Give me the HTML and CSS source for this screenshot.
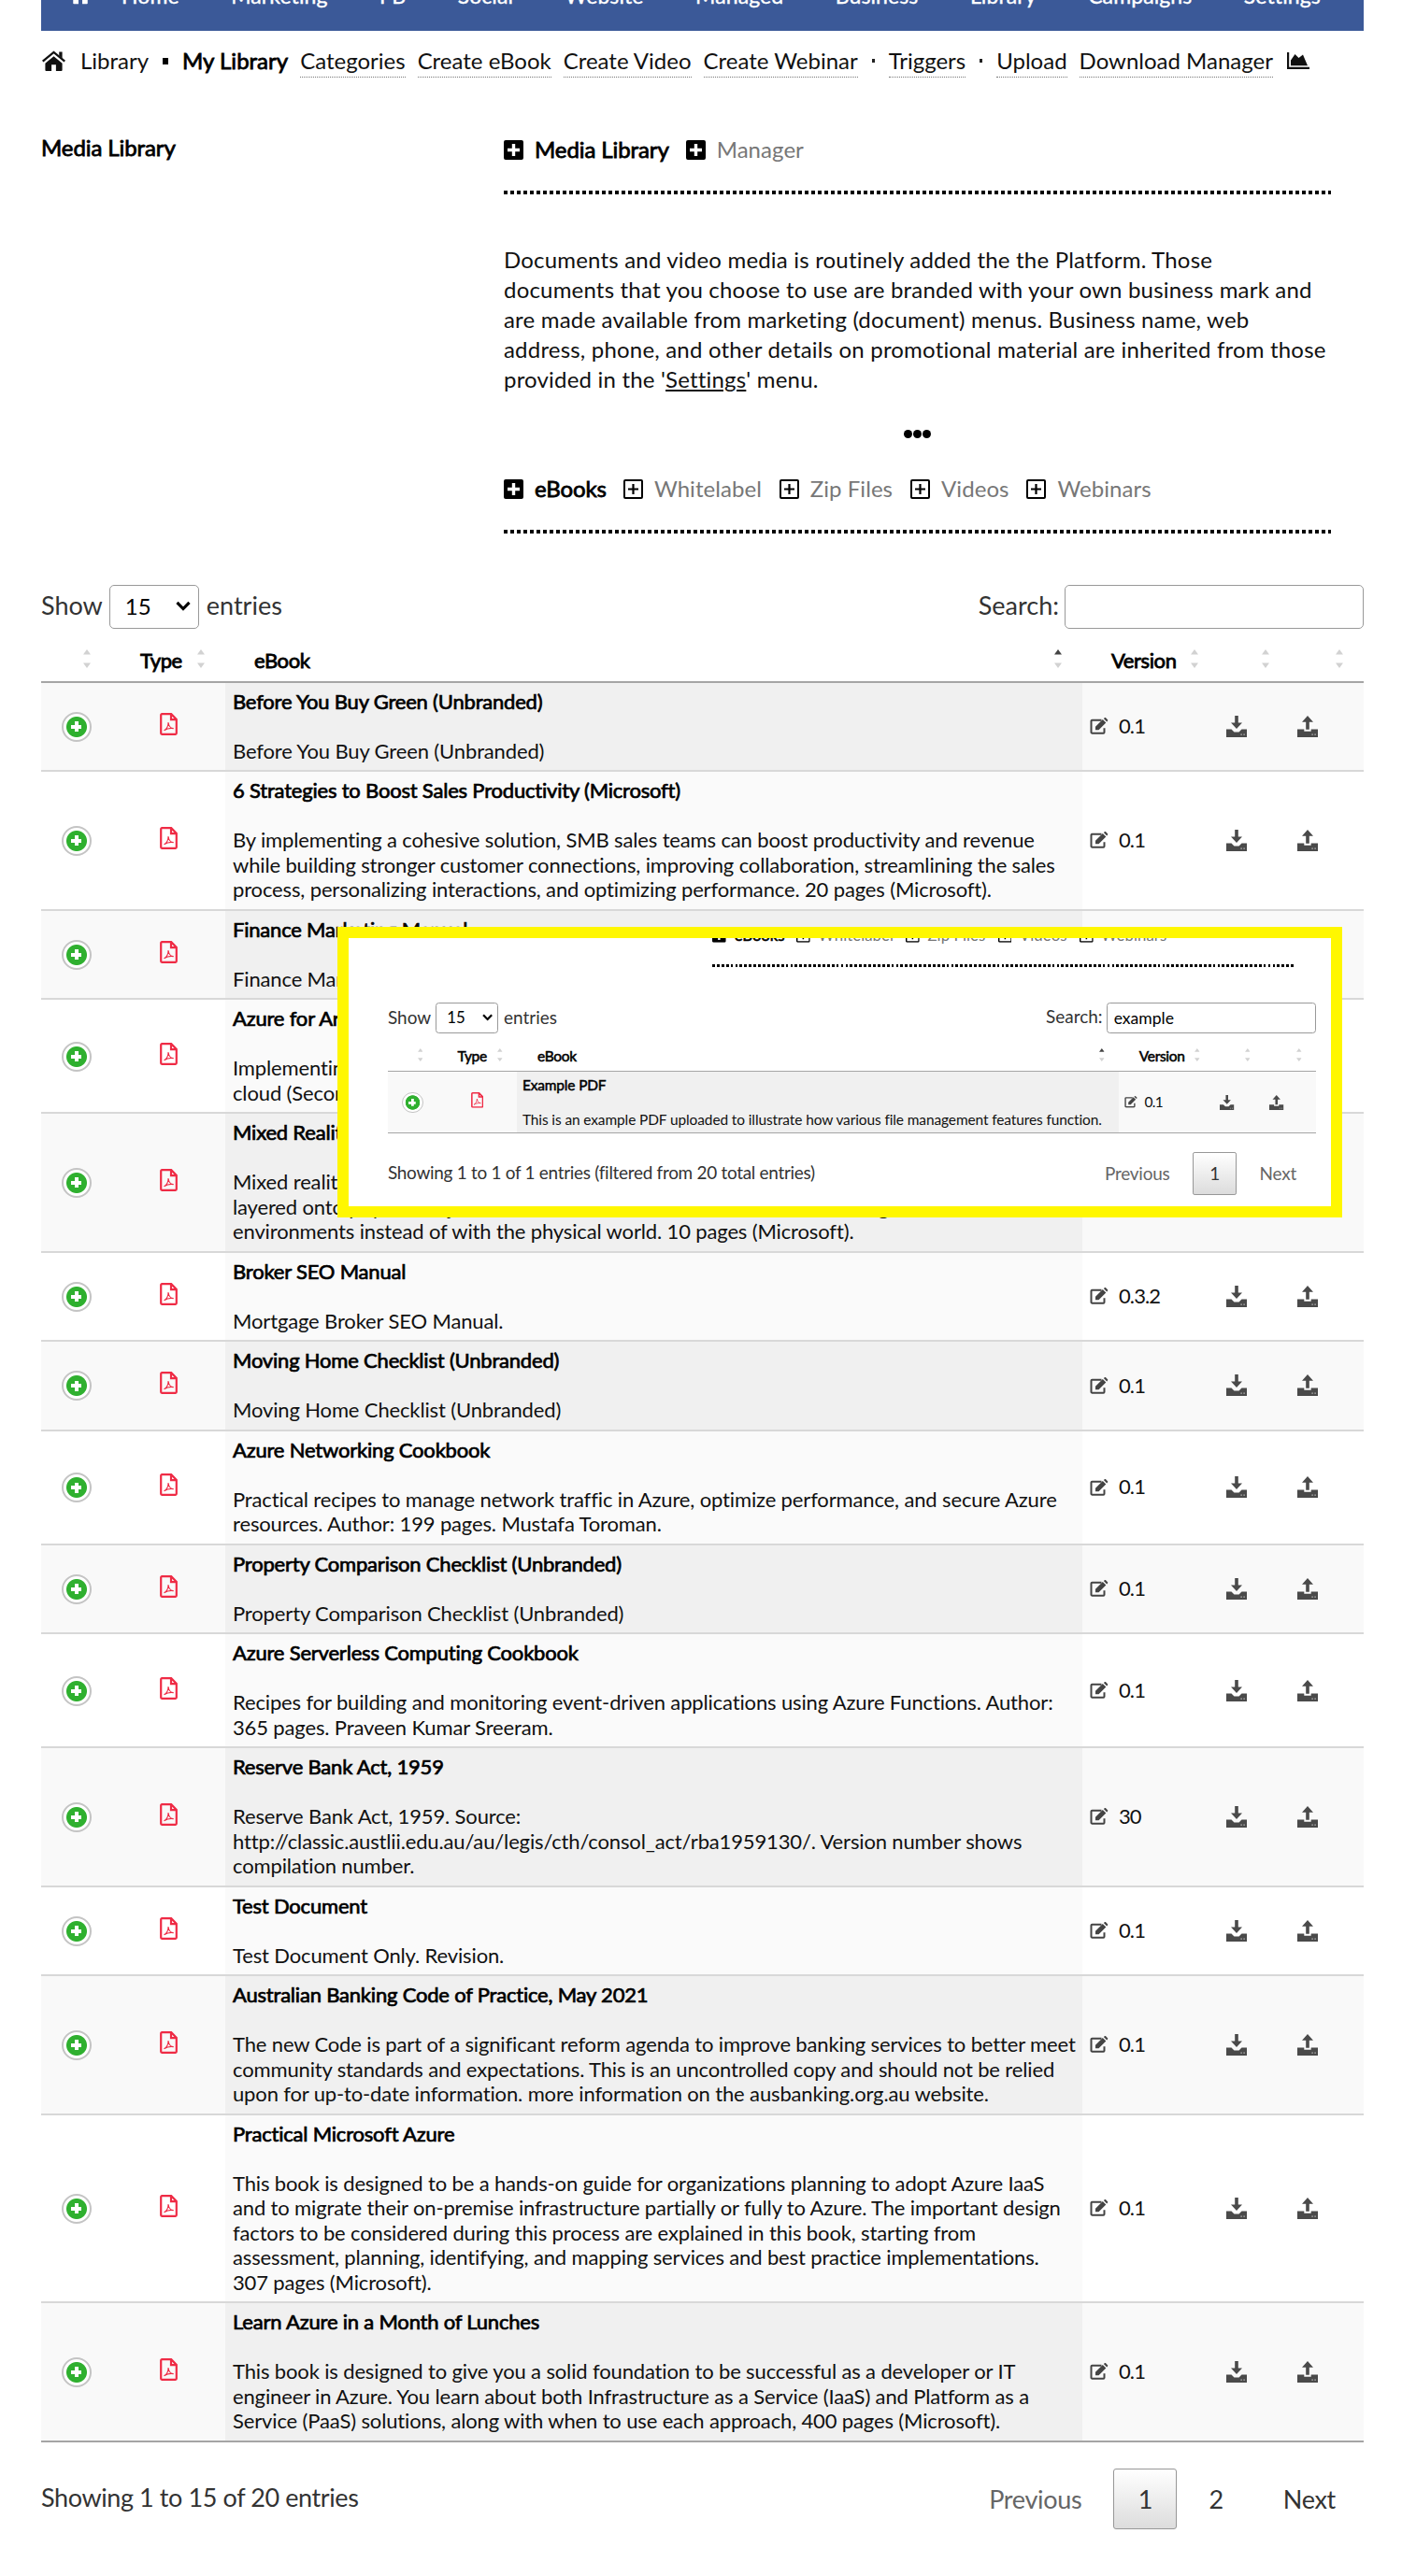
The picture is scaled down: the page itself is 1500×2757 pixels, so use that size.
FILE: index.html
```html
<!DOCTYPE html>
<html lang="en">
<head>
  <meta charset="UTF-8">
  <meta name="viewport" content="width=device-width, initial-scale=1.0">
  <title>My Library - Media Library</title>
  <link rel="stylesheet" href="styles.css">
</head>
<body>
  <!-- Icon sprite -->
  <svg class="sprite" width="0" height="0">
    <symbol id="i-home" viewBox="0 0 27 23">
      <path d="M13.5 6.5 4 14.3V22a1 1 0 0 0 1 1h6v-7h5v7h6a1 1 0 0 0 1-1v-7.7z"/>
      <path d="M1.2 12.2 13.5 2l12.3 10.2" fill="none" stroke="currentColor" stroke-width="2.4"/>
      <path d="M19.5 1.5H23V9l-3.5-3z"/>
    </symbol>
    <symbol id="i-chart" viewBox="0 0 24 20">
      <path d="M0 1h2.2v15.8H24V19H0z"/>
      <path d="M4 15.3V9.5L8.5 3l4 4L17 3.5l5 11.8z"/>
    </symbol>
    <symbol id="i-plus" viewBox="0 0 21 21">
      <path fill-rule="evenodd" d="M2 0h17a2 2 0 0 1 2 2v17a2 2 0 0 1-2 2H2a2 2 0 0 1-2-2V2a2 2 0 0 1 2-2zm6.8 4v4.8H4v3.4h4.8V17h3.4v-4.8H17V8.8h-4.8V4z"/>
    </symbol>
    <symbol id="i-plus-o" viewBox="0 0 21 21">
      <rect x="1" y="1" width="19" height="19" rx="1" fill="none" stroke="currentColor" stroke-width="2"/>
      <path d="M9.4 5h2.2v4.4H16v2.2h-4.400V16H9.400v-4.400H5V9.400h4.400z"/>
    </symbol>
    <symbol id="i-pdf" viewBox="0 0 19 24">
      <path d="M1.2 2.2a1 1 0 0 1 1-1h10L17.8 7v14.800a1 1 0 0 1-1 1H2.200a1 1 0 0 1-1-1zM12 1.200V7.200h5.800" fill="none" stroke="currentColor" stroke-width="2.200"/>
      <path d="M4.500 18.800c2.500-1.200 4.500-5 4.600-8.800.4 4 2.500 6.500 5.600 6.600-3.200-.6-7 .2-10.200 2.200z" fill="none" stroke="currentColor" stroke-width="1.100"/>
    </symbol>
    <symbol id="i-edit" viewBox="0 0 20 18">
      <path d="M12.500 2.700H2.500a1 1 0 0 0-1 1v12a1 1 0 0 0 1 1h12a1 1 0 0 0 1-1v-4.500" fill="none" stroke="currentColor" stroke-width="2"/>
      <path d="m6 9.800 7.800-7.900 3.500 3.500L9.500 13.300H6zM14.800 1l1-.8a1 1 0 0 1 1.300 0L19 2.200a1 1 0 0 1 0 1.300l-.8.900z"/>
    </symbol>
    <symbol id="i-download" viewBox="0 0 22 23">
      <path d="M9.200 0h3.600v7.500H17l-6 6.500-6-6.500h4.200z"/>
      <path d="M0 14.500h5.500l3 3h5l3-3H22V23H0z"/>
      <path d="M15.500 19.500h1.200v1.200h-1.200zM18.500 19.500h1.200v1.200h-1.200z" fill="#ccc"/>
    </symbol>
    <symbol id="i-upload" viewBox="0 0 22 23">
      <path d="m11 0 6 6.700h-4.200v8H9.200v-8H5z"/>
      <path d="M0 14.500h7.300v2.200h7.400v-2.200H22V23H0z"/>
      <path d="M15.500 19.500h1.200v1.200h-1.200zM18.500 19.500h1.200v1.200h-1.200z" fill="#ccc"/>
    </symbol>
    <symbol id="i-chevron" viewBox="0 0 16 11">
      <path d="m1.500 1.800 6.500 6.700 6.500-6.700" fill="none" stroke="currentColor" stroke-width="3.200"/>
    </symbol>
    <symbol id="i-sort" viewBox="0 0 8 20">
      <path d="m4 0 4 5.500H0z"/>
      <path d="m4 20 4-5.500H0z"/>
    </symbol>
    <symbol id="i-sort-asc" viewBox="0 0 8 20">
      <path d="m4 0 4 5.500H0z" fill="#444"/>
      <path d="m4 20 4-5.500H0z"/>
    </symbol>
  </svg>

  <div class="page">
    <nav class="navbar">
      <svg class="nav-home"><use href="#i-home"/></svg>
      <div class="nav-links">
        <a>Home</a><a>Marketing</a><a>FB</a><a>Social</a><a>Website</a><a>Managed</a><a>Business</a><a>Library</a><a>Campaigns</a><a>Settings</a>
      </div>
    </nav>

    <div class="breadcrumb">
      <svg class="bc-home"><use href="#i-home"/></svg>
      <span>Library</span>
      <i class="square"></i>
      <b>My Library</b>
      <a>Categories</a>
      <a>Create eBook</a>
      <a>Create Video</a>
      <a>Create Webinar</a>
      <i class="dot"></i>
      <a>Triggers</a>
      <i class="dot"></i>
      <a>Upload</a>
      <a>Download Manager</a>
      <svg class="bc-chart"><use href="#i-chart"/></svg>
    </div>

    <section class="intro">
      <b class="intro-title">Media Library</b>
      <div class="intro-body">
        <div class="tabs">
          <svg><use href="#i-plus"/></svg><b>Media Library</b>
          <svg><use href="#i-plus"/></svg><span>Manager</span>
        </div>
        <div class="rule"></div>
        <p>Documents and video media is routinely added the the Platform. Those<br>documents that you choose to use are branded with your own business mark and<br>are made available from marketing (document) menus. Business name, web<br>address, phone, and other details on promotional material are inherited from those<br>provided in the '<u>Settings</u>' menu.</p>
        <div class="ellipsis"><i></i><i></i><i></i></div>
        <div class="tabs">
          <svg><use href="#i-plus"/></svg><b>eBooks</b>
          <svg><use href="#i-plus-o"/></svg><span>Whitelabel</span>
          <svg><use href="#i-plus-o"/></svg><span>Zip Files</span>
          <svg><use href="#i-plus-o"/></svg><span>Videos</span>
          <svg><use href="#i-plus-o"/></svg><span>Webinars</span>
        </div>
        <div class="rule"></div>
      </div>
    </section>

    <div class="controls">
      <span>Show</span>
      <span class="select">15<svg><use href="#i-chevron"/></svg></span>
      <span>entries</span>
      <label class="search">Search:<input type="text"></label>
    </div>

    <table class="data">
      <colgroup><col class="c1"><col class="c2"><col class="c3"><col class="c4"><col class="c5"><col class="c6"></colgroup>
      <thead>
        <tr>
          <th><div><svg><use href="#i-sort"/></svg></div></th>
          <th><div><b>Type</b><svg><use href="#i-sort"/></svg></div></th>
          <th><div><b>eBook</b><svg><use href="#i-sort-asc"/></svg></div></th>
          <th><div><b>Version</b><svg><use href="#i-sort"/></svg></div></th>
          <th><div><svg><use href="#i-sort"/></svg></div></th>
          <th><div><svg><use href="#i-sort"/></svg></div></th>
        </tr>
      </thead>
      <tbody>
        <tr>
          <td><i class="expand"></i></td>
          <td><svg class="pdf"><use href="#i-pdf"/></svg></td>
          <td><b>Before You Buy Green (Unbranded)</b><p>Before You Buy Green (Unbranded)</p></td>
          <td><div class="version"><svg><use href="#i-edit"/></svg>0.1</div></td>
          <td><svg class="act"><use href="#i-download"/></svg></td>
          <td><svg class="act"><use href="#i-upload"/></svg></td>
        </tr>
        <tr>
          <td><i class="expand"></i></td>
          <td><svg class="pdf"><use href="#i-pdf"/></svg></td>
          <td><b>6 Strategies to Boost Sales Productivity (Microsoft)</b><p>By implementing a cohesive solution, SMB sales teams can boost productivity and revenue<br>while building stronger customer connections, improving collaboration, streamlining the sales<br>process, personalizing interactions, and optimizing performance. 20 pages (Microsoft).</p></td>
          <td><div class="version"><svg><use href="#i-edit"/></svg>0.1</div></td>
          <td><svg class="act"><use href="#i-download"/></svg></td>
          <td><svg class="act"><use href="#i-upload"/></svg></td>
        </tr>
        <tr>
          <td><i class="expand"></i></td>
          <td><svg class="pdf"><use href="#i-pdf"/></svg></td>
          <td><b>Finance Marketing Manual</b><p>Finance Marketing Manual</p></td>
          <td><div class="version"><svg><use href="#i-edit"/></svg>0.1</div></td>
          <td><svg class="act"><use href="#i-download"/></svg></td>
          <td><svg class="act"><use href="#i-upload"/></svg></td>
        </tr>
        <tr>
          <td><i class="expand"></i></td>
          <td><svg class="pdf"><use href="#i-pdf"/></svg></td>
          <td><b>Azure for Architects</b><p>Implementing cloud design, DevOps, containers and serverless solutions in the public<br>cloud (Second Edition).</p></td>
          <td><div class="version"><svg><use href="#i-edit"/></svg>0.1</div></td>
          <td><svg class="act"><use href="#i-download"/></svg></td>
          <td><svg class="act"><use href="#i-upload"/></svg></td>
        </tr>
        <tr>
          <td><i class="expand"></i></td>
          <td><svg class="pdf"><use href="#i-pdf"/></svg></td>
          <td><b>Mixed Reality</b><p>Mixed reality blends the physical and digital worlds, with virtual content<br>layered onto physical objects. Users interact with immersive virtual settings and<br>environments instead of with the physical world. 10 pages (Microsoft).</p></td>
          <td><div class="version"><svg><use href="#i-edit"/></svg>0.1</div></td>
          <td><svg class="act"><use href="#i-download"/></svg></td>
          <td><svg class="act"><use href="#i-upload"/></svg></td>
        </tr>
        <tr>
          <td><i class="expand"></i></td>
          <td><svg class="pdf"><use href="#i-pdf"/></svg></td>
          <td><b>Broker SEO Manual</b><p>Mortgage Broker SEO Manual.</p></td>
          <td><div class="version"><svg><use href="#i-edit"/></svg>0.3.2</div></td>
          <td><svg class="act"><use href="#i-download"/></svg></td>
          <td><svg class="act"><use href="#i-upload"/></svg></td>
        </tr>
        <tr>
          <td><i class="expand"></i></td>
          <td><svg class="pdf"><use href="#i-pdf"/></svg></td>
          <td><b>Moving Home Checklist (Unbranded)</b><p>Moving Home Checklist (Unbranded)</p></td>
          <td><div class="version"><svg><use href="#i-edit"/></svg>0.1</div></td>
          <td><svg class="act"><use href="#i-download"/></svg></td>
          <td><svg class="act"><use href="#i-upload"/></svg></td>
        </tr>
        <tr>
          <td><i class="expand"></i></td>
          <td><svg class="pdf"><use href="#i-pdf"/></svg></td>
          <td><b>Azure Networking Cookbook</b><p>Practical recipes to manage network traffic in Azure, optimize performance, and secure Azure<br>resources. Author: 199 pages. Mustafa Toroman.</p></td>
          <td><div class="version"><svg><use href="#i-edit"/></svg>0.1</div></td>
          <td><svg class="act"><use href="#i-download"/></svg></td>
          <td><svg class="act"><use href="#i-upload"/></svg></td>
        </tr>
        <tr>
          <td><i class="expand"></i></td>
          <td><svg class="pdf"><use href="#i-pdf"/></svg></td>
          <td><b>Property Comparison Checklist (Unbranded)</b><p>Property Comparison Checklist (Unbranded)</p></td>
          <td><div class="version"><svg><use href="#i-edit"/></svg>0.1</div></td>
          <td><svg class="act"><use href="#i-download"/></svg></td>
          <td><svg class="act"><use href="#i-upload"/></svg></td>
        </tr>
        <tr>
          <td><i class="expand"></i></td>
          <td><svg class="pdf"><use href="#i-pdf"/></svg></td>
          <td><b>Azure Serverless Computing Cookbook</b><p>Recipes for building and monitoring event-driven applications using Azure Functions. Author:<br>365 pages. Praveen Kumar Sreeram.</p></td>
          <td><div class="version"><svg><use href="#i-edit"/></svg>0.1</div></td>
          <td><svg class="act"><use href="#i-download"/></svg></td>
          <td><svg class="act"><use href="#i-upload"/></svg></td>
        </tr>
        <tr>
          <td><i class="expand"></i></td>
          <td><svg class="pdf"><use href="#i-pdf"/></svg></td>
          <td><b>Reserve Bank Act, 1959</b><p>Reserve Bank Act, 1959. Source:<br>http://classic.austlii.edu.au/au/legis/cth/consol_act/rba1959130/. Version number shows<br>compilation number.</p></td>
          <td><div class="version"><svg><use href="#i-edit"/></svg>30</div></td>
          <td><svg class="act"><use href="#i-download"/></svg></td>
          <td><svg class="act"><use href="#i-upload"/></svg></td>
        </tr>
        <tr>
          <td><i class="expand"></i></td>
          <td><svg class="pdf"><use href="#i-pdf"/></svg></td>
          <td><b>Test Document</b><p>Test Document Only. Revision.</p></td>
          <td><div class="version"><svg><use href="#i-edit"/></svg>0.1</div></td>
          <td><svg class="act"><use href="#i-download"/></svg></td>
          <td><svg class="act"><use href="#i-upload"/></svg></td>
        </tr>
        <tr>
          <td><i class="expand"></i></td>
          <td><svg class="pdf"><use href="#i-pdf"/></svg></td>
          <td><b>Australian Banking Code of Practice, May 2021</b><p>The new Code is part of a significant reform agenda to improve banking services to better meet<br>community standards and expectations. This is an uncontrolled copy and should not be relied<br>upon for up-to-date information. more information on the ausbanking.org.au website.</p></td>
          <td><div class="version"><svg><use href="#i-edit"/></svg>0.1</div></td>
          <td><svg class="act"><use href="#i-download"/></svg></td>
          <td><svg class="act"><use href="#i-upload"/></svg></td>
        </tr>
        <tr>
          <td><i class="expand"></i></td>
          <td><svg class="pdf"><use href="#i-pdf"/></svg></td>
          <td><b>Practical Microsoft Azure</b><p>This book is designed to be a hands-on guide for organizations planning to adopt Azure IaaS<br>and to migrate their on-premise infrastructure partially or fully to Azure. The important design<br>factors to be considered during this process are explained in this book, starting from<br>assessment, planning, identifying, and mapping services and best practice implementations.<br>307 pages (Microsoft).</p></td>
          <td><div class="version"><svg><use href="#i-edit"/></svg>0.1</div></td>
          <td><svg class="act"><use href="#i-download"/></svg></td>
          <td><svg class="act"><use href="#i-upload"/></svg></td>
        </tr>
        <tr>
          <td><i class="expand"></i></td>
          <td><svg class="pdf"><use href="#i-pdf"/></svg></td>
          <td><b>Learn Azure in a Month of Lunches</b><p>This book is designed to give you a solid foundation to be successful as a developer or IT<br>engineer in Azure. You learn about both Infrastructure as a Service (IaaS) and Platform as a<br>Service (PaaS) solutions, along with when to use each approach, 400 pages (Microsoft).</p></td>
          <td><div class="version"><svg><use href="#i-edit"/></svg>0.1</div></td>
          <td><svg class="act"><use href="#i-download"/></svg></td>
          <td><svg class="act"><use href="#i-upload"/></svg></td>
        </tr>
      </tbody>
    </table>

    <div class="footer">
      <span class="info">Showing 1 to 15 of 20 entries</span>
      <div class="pager">
        <a class="disabled">Previous</a><a class="current">1</a><a>2</a><a>Next</a>
      </div>
    </div>
  </div>

  <!-- Search result inset -->
  <div class="inset">
    <div class="inset-body">
      <div class="tabs">
        <svg><use href="#i-plus"/></svg><b>eBooks</b>
        <svg><use href="#i-plus-o"/></svg><span>Whitelabel</span>
        <svg><use href="#i-plus-o"/></svg><span>Zip Files</span>
        <svg><use href="#i-plus-o"/></svg><span>Videos</span>
        <svg><use href="#i-plus-o"/></svg><span>Webinars</span>
      </div>
      <div class="rule"></div>
      <div class="controls">
        <span>Show</span>
        <span class="select">15<svg><use href="#i-chevron"/></svg></span>
        <span>entries</span>
        <label class="search">Search:<input type="text" value="example"></label>
      </div>
      <table class="data">
        <colgroup><col class="c1"><col class="c2"><col class="c3"><col class="c4"><col class="c5"><col class="c6"></colgroup>
        <thead>
          <tr>
            <th><div><svg><use href="#i-sort"/></svg></div></th>
            <th><div><b>Type</b><svg><use href="#i-sort"/></svg></div></th>
            <th><div><b>eBook</b><svg><use href="#i-sort-asc"/></svg></div></th>
            <th><div><b>Version</b><svg><use href="#i-sort"/></svg></div></th>
            <th><div><svg><use href="#i-sort"/></svg></div></th>
            <th><div><svg><use href="#i-sort"/></svg></div></th>
          </tr>
        </thead>
        <tbody>
          <tr>
            <td><i class="expand"></i></td>
            <td><svg class="pdf"><use href="#i-pdf"/></svg></td>
            <td><b>Example PDF</b><p>This is an example PDF uploaded to illustrate how various file management features function.</p></td>
            <td><div class="version"><svg><use href="#i-edit"/></svg>0.1</div></td>
            <td><svg class="act"><use href="#i-download"/></svg></td>
            <td><svg class="act"><use href="#i-upload"/></svg></td>
          </tr>
        </tbody>
      </table>
      <div class="footer">
        <span class="info">Showing 1 to 1 of 1 entries (filtered from 20 total entries)</span>
        <div class="pager">
          <a class="disabled">Previous</a><a class="current">1</a><a class="disabled">Next</a>
        </div>
      </div>
    </div>
  </div>
</body>
</html>
```
FILE: styles.css
```css
* {
  box-sizing: border-box;
}

body {
  margin: 0;
  position: relative;
  background: #fff;
  color: #111;
  font-family: Lato, "Liberation Sans", sans-serif;
  font-size: 24px;
  line-height: 32px;
  white-space: nowrap;
}

svg {
  display: block;
  flex: none;
  fill: currentColor;
}

.sprite {
  position: absolute;
}

/* regular weight thickened, so bold keeps the regular widths */
b {
  font-weight: 400;
  color: #000;
  -webkit-text-stroke: 0.8px #000;
}

.page {
  width: 1415px;
  height: 2757px;
  margin-left: 44px;
  overflow: hidden;
}

/* Navigation */
.navbar {
  height: 33px;
  background: #3b5998;
  color: #fff;
  display: flex;
  overflow: hidden;
}

.nav-home {
  width: 22px;
  height: 20px;
  margin: -15px 0 0 31px;
}

.nav-links {
  width: 1283px;
  margin: -19px 0 0 33px;
  display: flex;
  justify-content: space-between;
  font-size: 23px;
  line-height: 28px;
  letter-spacing: 0.1px;
  -webkit-text-stroke: 0.4px #fff;
}

.breadcrumb {
  width: 1357px;
  margin-top: 16px;
  display: flex;
  gap: 13px;
  align-items: center;
}

.breadcrumb a {
  height: 34px;
  margin-bottom: -2px;
  border-bottom: 1px dotted #777;
}

.bc-home {
  width: 27px;
  height: 22px;
  margin-right: 2px;
}

.bc-chart {
  width: 24px;
  height: 20px;
  margin-left: auto;
}

.square {
  width: 6px;
  height: 7px;
  margin: 0 2px;
  background: #000;
}

.dot {
  width: 3px;
  height: 4px;
  margin: 0 2px;
  background: #222;
}

/* Intro */
.intro {
  margin-top: 61px;
  display: flex;
}

.intro-title {
  width: 495px;
  letter-spacing: -0.1px;
}

.intro-body {
  width: 885px;
  padding-top: 2px;
}

.tabs {
  display: flex;
  align-items: center;
}

.tabs svg {
  width: 21px;
  height: 21px;
  color: #000;
}

.tabs b,
.tabs span {
  margin: 0 18px 0 12px;
}

.tabs b {
  letter-spacing: -0.1px;
}

.tabs span {
  margin-right: 19px;
  letter-spacing: 0.05px;
  color: #777;
}

.rule {
  width: 885px;
  height: 4px;
  margin-top: 28px;
  background: repeating-linear-gradient(90deg, #000 0 4px, #fff 4px 7px);
}

.intro p {
  margin: 54px 0 38px;
  letter-spacing: 0.19px;
}

.ellipsis {
  margin-bottom: 38px;
  display: flex;
  justify-content: center;
  gap: 1px;
}

.ellipsis i {
  width: 9px;
  height: 9px;
  border-radius: 50%;
  background: #000;
}

/* Table controls */
.controls {
  height: 47px;
  margin-top: 55px;
  display: flex;
  align-items: center;
  font-size: 27px;
  color: #333;
}

.controls > span:not(.select) {
  padding-bottom: 3px;
}

.select {
  width: 96px;
  height: 47px;
  margin: 0 8px 0 7px;
  padding: 0 8px 2px 16px;
  border: 1.5px solid #999;
  border-radius: 5px;
  display: flex;
  align-items: center;
  justify-content: space-between;
  font-size: 24px;
  color: #000;
}

.select svg {
  width: 16px;
  height: 11px;
}

.search {
  margin-left: auto;
  display: flex;
  line-height: 44px;
}

.search input {
  width: 320px;
  height: 47px;
  margin-left: 6px;
  padding: 0 10px;
  border: 1.5px solid #999;
  border-radius: 5px;
  font: 25px Lato, sans-serif;
}

/* Data table */
.data {
  width: 1415px;
  table-layout: fixed;
  border-collapse: separate;
  border-spacing: 0;
  border-bottom: 2px solid #a5a5a5;
  font-size: 22px;
  line-height: 26.5px;
  letter-spacing: -0.14px;
}

.c1 { width: 75px; }
.c2 { width: 122px; }
.c3 { width: 917px; }
.c4 { width: 146px; }
.c5 { width: 76px; }
.c6 { width: 79px; }

th {
  height: 57.5px;
  padding: 16px 22px 0 31px;
  border-bottom: 2px solid #a5a5a5;
  font-weight: 400;
  text-align: left;
  vertical-align: top;
}

th div {
  height: 39px;
  display: flex;
  align-items: center;
  padding-bottom: 7px;
}

th b {
  margin-top: 5px;
  letter-spacing: -0.4px;
}

th svg {
  width: 8px;
  height: 20px;
  margin: 0 0 0 auto;
  color: #d2d2d2;
}

td {
  padding: 7px 8px;
  border-top: 2px solid #d8d8d8;
  vertical-align: middle;
}

tbody tr:first-child td {
  border-top: 0;
}

tbody tr:nth-child(odd) {
  background: #f9f9f9;
}

tbody tr:nth-child(odd) td:nth-child(3) {
  background: #f0f0f0;
}

tbody tr:nth-child(even) td:nth-child(3) {
  background: #fafafa;
}

td b {
  display: block;
  letter-spacing: -0.2px;
  -webkit-text-stroke-width: 0.7px;
}

td p {
  margin: 26.5px 0 0;
}

.expand {
  display: block;
  width: 32px;
  height: 32px;
  margin: 1px auto 0;
  border: 2px solid #c4c4c4;
  border-radius: 50%;
  background:
    linear-gradient(#fff, #fff) center / 11px 4px no-repeat,
    linear-gradient(#fff, #fff) center / 4px 11px no-repeat,
    radial-gradient(circle, #2fb02f 10.5px, #fff 11.5px);
}

.pdf {
  width: 19px;
  height: 24px;
  margin: -5px auto 0;
  color: #ef2b45;
}

.version {
  display: flex;
  align-items: center;
  gap: 11px;
  letter-spacing: -0.9px;
}

.version svg {
  width: 20px;
  height: 18px;
  color: #444;
}

.act {
  width: 22px;
  height: 23px;
  color: #4a4a4a;
}

/* Footer */
.footer {
  margin-top: 28px;
  display: flex;
  align-items: center;
  justify-content: space-between;
  font-size: 27px;
  color: #333;
}

.info {
  padding-bottom: 3px;
  letter-spacing: -0.4px;
}

.pager {
  display: flex;
  gap: 4px;
}

.pager a {
  height: 65px;
  padding: 0 29px;
  line-height: 63px;
  border: 1.5px solid transparent;
  letter-spacing: -0.3px;
}

.pager .disabled {
  color: #666;
}

.pager .current {
  width: 68px;
  padding: 0;
  text-align: center;
  border-color: #979797;
  border-radius: 3px;
  background: linear-gradient(#fff, #dcdcdc);
}

/* Inset showing a filtered table */
.inset {
  position: absolute;
  top: 992px;
  left: 361px;
  width: 1075px;
  height: 311px;
  padding-left: 42px;
  border: 12px solid #fff700;
  background: #fff;
  overflow: hidden;
}

.inset-body {
  width: 1415px;
  zoom: 0.702;
}

.inset .tabs {
  margin: -20px 0 0 495px;
}

.inset .rule {
  margin-left: 495px;
}
```
